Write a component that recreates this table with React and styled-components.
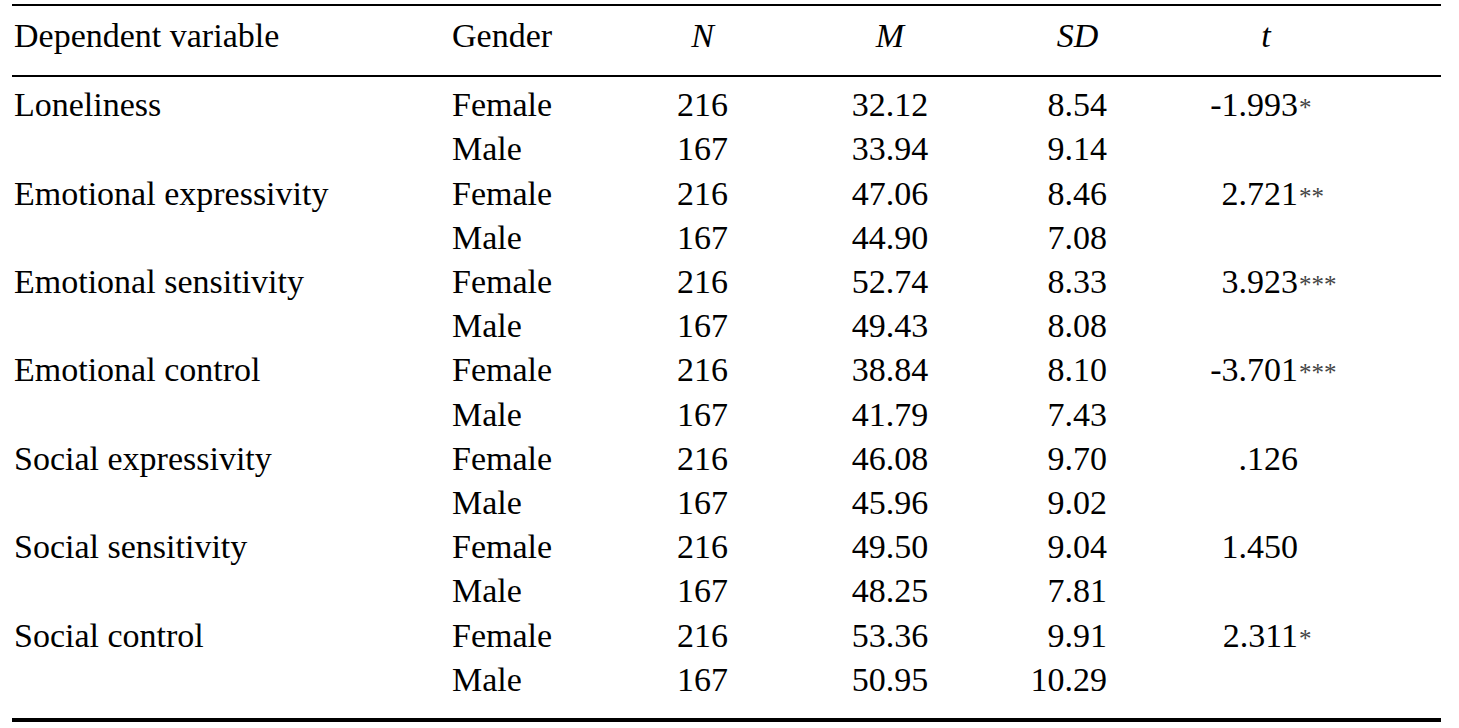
import React from "react";
import styled, { createGlobalStyle } from "styled-components";

const rows = [
  { name: "Loneliness", f: ["216", "32.12", "8.54"], m: ["167", "33.94", "9.14"], t: "-1.993", stars: "*" },
  { name: "Emotional expressivity", f: ["216", "47.06", "8.46"], m: ["167", "44.90", "7.08"], t: "2.721", stars: "**" },
  { name: "Emotional sensitivity", f: ["216", "52.74", "8.33"], m: ["167", "49.43", "8.08"], t: "3.923", stars: "***" },
  { name: "Emotional control", f: ["216", "38.84", "8.10"], m: ["167", "41.79", "7.43"], t: "-3.701", stars: "***" },
  { name: "Social expressivity", f: ["216", "46.08", "9.70"], m: ["167", "45.96", "9.02"], t: ".126", stars: "" },
  { name: "Social sensitivity", f: ["216", "49.50", "9.04"], m: ["167", "48.25", "7.81"], t: "1.450", stars: "" },
  { name: "Social control", f: ["216", "53.36", "9.91"], m: ["167", "50.95", "10.29"], t: "2.311", stars: "*" },
];

const GlobalStyle = createGlobalStyle`
  html, body {
    margin: 0;
    padding: 0;
    background: #fff;
    overflow: hidden;
  }
  body {
    font-family: "Liberation Serif", "Times New Roman", serif;
    color: #000;
  }
`;

const Page = styled.div`
  padding: 4px 0 0 12px;
  width: 1429px;
`;

const Table = styled.table`
  width: 1429px;
  border-collapse: collapse;
  table-layout: fixed;
  font-size: 34px;
  line-height: 44.2px;
`;

const Head = styled.thead`
  border-top: 2px solid #000;
  border-bottom: 2px solid #000;
`;

const Body = styled.tbody`
  border-bottom: 4px solid #000;

  tr:first-child td {
    padding-top: 6px;
  }
  tr:last-child td {
    padding-bottom: 16px;
  }
`;

const HeadCell = styled.th`
  font-weight: normal;
  font-style: ${(p) => (p.$italic ? "italic" : "normal")};
  text-align: ${(p) => p.$align || "left"};
  padding: 8px ${(p) => p.$pr || 0}px 17px ${(p) => p.$pl || 0}px;
  white-space: nowrap;
`;

const Cell = styled.td`
  text-align: ${(p) => p.$align || "left"};
  padding: 0 ${(p) => p.$pr || 0}px 0 ${(p) => p.$pl || 0}px;
  white-space: nowrap;
  vertical-align: top;
`;

const TValue = styled.span`
  display: inline-block;
  width: 100px;
  text-align: right;
`;

const Stars = styled.span`
  font-size: 25px;
  line-height: 0;
  color: #444;
  margin-left: 1px;
`;

const Footnote = styled.div`
  display: flex;
  padding-top: 4px;
  font-size: 22px;
  line-height: 18px;
  color: #222;
`;

const Note = styled.span`
  margin-left: ${(p) => p.$ml}px;
  white-space: nowrap;
`;

const NoteStar = styled.span`
  color: #555;
`;

const widths = [438, 170, 165, 210, 165, 281];

const StatRow = ({ name, gender, vals, t, stars }) => (
  <tr>
    <Cell $pl={2}>{name}</Cell>
    <Cell $pl={2}>{gender}</Cell>
    <Cell $align="center">{vals[0]}</Cell>
    <Cell $align="center">{vals[1]}</Cell>
    <Cell $align="right" $pr={53}>{vals[2]}</Cell>
    <Cell $pl={38}>
      {t && (
        <>
          <TValue>{t}</TValue>
          {stars && <Stars>{stars}</Stars>}
        </>
      )}
    </Cell>
  </tr>
);

export default function App() {
  return (
    <Page>
      <GlobalStyle />
      <Table>
        <colgroup>
          {widths.map((w, i) => (
            <col key={i} style={{ width: w }} />
          ))}
        </colgroup>
        <Head>
          <tr>
            <HeadCell $pl={2}>Dependent variable</HeadCell>
            <HeadCell $pl={2}>Gender</HeadCell>
            <HeadCell $italic $align="center">N</HeadCell>
            <HeadCell $italic $align="center">M</HeadCell>
            <HeadCell $italic $align="center">SD</HeadCell>
            <HeadCell $italic $align="center" $pr={69}>t</HeadCell>
          </tr>
        </Head>
        <Body>
          {rows.map((r) => (
            <React.Fragment key={r.name}>
              <StatRow name={r.name} gender="Female" vals={r.f} t={r.t} stars={r.stars} />
              <StatRow name="" gender="Male" vals={r.m} />
            </React.Fragment>
          ))}
        </Body>
      </Table>
      <Footnote>
        <Note $ml={110}><NoteStar>*</NoteStar><i>p</i> &lt; .05</Note>
        <Note $ml={78}><NoteStar>**</NoteStar><i>p</i> &lt; .01</Note>
        <Note $ml={70}><NoteStar>***</NoteStar><i>p</i> &lt; .001</Note>
      </Footnote>
    </Page>
  );
}
